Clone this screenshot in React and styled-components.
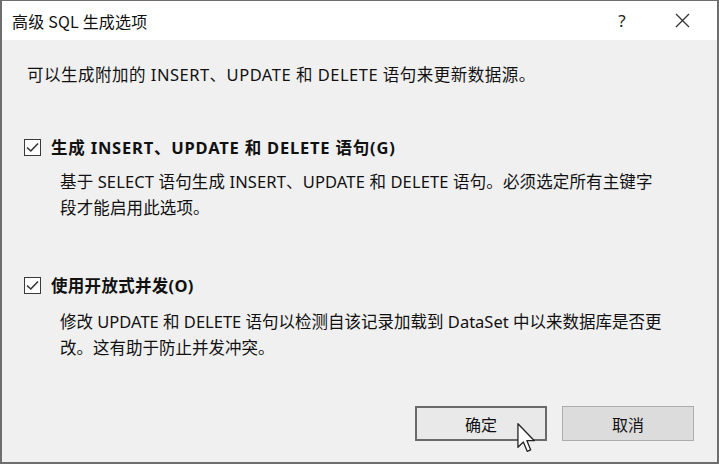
import React from "react";
import styled, { createGlobalStyle } from "styled-components";

const Global = createGlobalStyle`
  html, body { margin: 0; padding: 0; background: #f0f0f0; }
  body { font-family: "Noto Sans", "Noto Sans CJK SC", sans-serif; color: #111; }
  * { box-sizing: border-box; }
`;

const Window = styled.div`
  width: 719px;
  height: 464px;
  border: 2px solid #6e6e6e;
  border-top-width: 1px;
  display: flex;
  flex-direction: column;
  background: #f0f0f0;
  position: relative;
  overflow: hidden;
`;

const TitleBar = styled.div`
  height: 39px;
  background: #fff;
  display: flex;
  align-items: center;
  padding-left: 10px;
  flex-shrink: 0;
`;

const Title = styled.div`
  font-size: 16px;
  flex: 1;
  color: #111;
  font-family: "Noto Sans CJK SC", sans-serif;
  letter-spacing: 0.2px;
`;

const TitleButton = styled.div`
  width: ${(p) => p.$w}px;
  height: 39px;
  display: flex;
  align-items: center;
  justify-content: center;
  font-size: 17px;
  color: #222;
`;

const Body = styled.div`
  flex: 1;
  display: flex;
  flex-direction: column;
  padding: 22px 23px 21px 25px;
`;

const Text = styled.div`
  font-size: 16.5px;
  line-height: 26px;
  white-space: nowrap;
  color: #111;
  letter-spacing: ${(p) => p.$ls || 0}px;
`;

const Option = styled.div`
  margin-top: ${(p) => p.$mt}px;
  display: flex;
  flex-direction: column;
`;

const CheckRow = styled.label`
  display: flex;
  align-items: center;
  height: 26px;
  margin-left: -3px;
`;

const Box = styled.span`
  width: 17px;
  height: 17px;
  border: 1px solid #3a3a3a;
  background: #fff;
  display: flex;
  align-items: center;
  justify-content: center;
  margin-right: 10px;
`;

const Label = styled.span`
  font-size: 16.5px;
  font-weight: 700;
  white-space: nowrap;
  color: #111;
  letter-spacing: ${(p) => p.$ls}px;
`;

const Desc = styled(Text)`
  margin-top: ${(p) => p.$mt}px;
  margin-left: 33px;
`;

const Buttons = styled.div`
  margin-top: auto;
  display: flex;
  justify-content: flex-end;
  gap: 15px;
`;

const Button = styled.div`
  width: 132px;
  height: 35px;
  display: flex;
  align-items: center;
  justify-content: center;
  font-size: 16px;
  color: #111;
  font-family: "Noto Sans CJK SC", sans-serif;
  background: ${(p) => (p.$primary ? "#e9e9e9" : "#dcdcdc")};
  border: ${(p) => (p.$primary ? "2px solid #6a6a6a" : "1px solid #adadad")};
  position: relative;
`;

const Cursor = styled.svg`
  position: absolute;
  left: 100px;
  top: 15px;
`;

const Check = () => (
  <svg width="13" height="11" viewBox="0 0 13 11">
    <path d="M1 5.5 L4.8 9 L12 1.5" fill="none" stroke="#333" strokeWidth="1.6" />
  </svg>
);

const Checkbox = ({ label, ls }) => (
  <CheckRow>
    <Box>
      <Check />
    </Box>
    <Label $ls={ls}>{label}</Label>
  </CheckRow>
);

export default function App() {
  return (
    <>
      <Global />
      <Window>
        <TitleBar>
          <Title>高级 SQL 生成选项</Title>
          <TitleButton $w={50}>?</TitleButton>
          <TitleButton $w={70}>
            <svg width="15" height="15" viewBox="0 0 15 15">
              <path d="M1 1 L14 14 M14 1 L1 14" stroke="#333" strokeWidth="1.3" />
            </svg>
          </TitleButton>
        </TitleBar>
        <Body>
          <Text $ls={0.5}>可以生成附加的 INSERT、UPDATE 和 DELETE 语句来更新数据源。</Text>
          <Option $mt={46}>
            <Checkbox label="生成 INSERT、UPDATE 和 DELETE 语句(G)" ls={0.8} />
            <Desc $mt={9} $ls={0.13}>
              基于 SELECT 语句生成 INSERT、UPDATE 和 DELETE 语句。必须选定所有主键字
              <br />
              段才能启用此选项。
            </Desc>
          </Option>
          <Option $mt={51}>
            <Checkbox label="使用开放式并发(O)" ls={0.3} />
            <Desc $mt={11}>
              修改 UPDATE 和 DELETE 语句以检测自该记录加载到 DataSet 中以来数据库是否更
              <br />
              改。这有助于防止并发冲突。
            </Desc>
          </Option>
          <Buttons>
            <Button $primary>
              确定
              <Cursor width="19" height="30" viewBox="0 0 13 21">
                <path
                  d="M0.5 0.5 L0.5 17 L4.3 13.3 L7 19.8 L9.4 18.8 L6.8 12.4 L12 12.4 Z"
                  fill="#fff"
                  stroke="#222"
                  strokeWidth="0.9"
                  strokeLinejoin="round"
                />
              </Cursor>
            </Button>
            <Button>取消</Button>
          </Buttons>
        </Body>
      </Window>
    </>
  );
}
